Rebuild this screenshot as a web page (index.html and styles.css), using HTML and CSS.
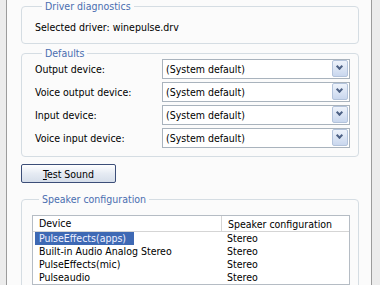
FILE: index.html
```html
<!DOCTYPE html>
<html lang="en">
<head>
    <meta charset="UTF-8">
    <title>Audio</title>
    <link rel="stylesheet" href="styles.css">
</head>
<body>
    <div class="tab-panel">
        <fieldset class="group">
            <legend>Driver diagnostics</legend>
            <p class="driver">Selected driver: winepulse.drv</p>
        </fieldset>

        <fieldset class="group defaults">
            <legend>Defaults</legend>
            <div class="row">
                <span class="label">Output device:</span>
                <div class="combo"><span>(System default)</span><i class="arrow"></i></div>
            </div>
            <div class="row">
                <span class="label">Voice output device:</span>
                <div class="combo"><span>(System default)</span><i class="arrow"></i></div>
            </div>
            <div class="row">
                <span class="label">Input device:</span>
                <div class="combo"><span>(System default)</span><i class="arrow"></i></div>
            </div>
            <div class="row">
                <span class="label">Voice input device:</span>
                <div class="combo"><span>(System default)</span><i class="arrow"></i></div>
            </div>
        </fieldset>

        <button class="test-btn"><u>T</u>est Sound</button>

        <fieldset class="group speakers">
            <legend>Speaker configuration</legend>
            <div class="listview">
                <div class="lv-head">
                    <span class="col-device">Device</span>
                    <span class="col-config">Speaker configuration</span>
                </div>
                <div class="lv-row"><span class="col-device"><em class="selected">PulseEffects(apps)</em></span><span class="col-config">Stereo</span></div>
                <div class="lv-row"><span class="col-device"><em>Built-in Audio Analog Stereo</em></span><span class="col-config">Stereo</span></div>
                <div class="lv-row"><span class="col-device"><em>PulseEffects(mic)</em></span><span class="col-config">Stereo</span></div>
                <div class="lv-row"><span class="col-device"><em>Pulseaudio</em></span><span class="col-config">Stereo</span></div>
            </div>
        </fieldset>
    </div>
</body>
</html>
```

FILE: styles.css
```css
html, body {
    margin: 0;
    height: 100%;
    overflow: hidden;
}
body {
    background: #ececec;
    font-family: "DejaVu Sans Condensed", "Liberation Sans", Arial, sans-serif;
    font-size: 10.5px;
    line-height: 12px;
    color: #000;
}
.tab-panel {
    margin-left: 6px;
    width: 338px;
    height: 285px;
    overflow: hidden;
    padding: 0 12px 0 14px;
    background: #fbfbfb;
    border-left: 1px solid #9c9c9c;
    border-right: 1px solid #9c9c9c;
}
.group {
    margin: 0;
    padding: 0 8px 10px 13px;
    border: 1px solid #d5dde3;
    border-radius: 4px;
}
.group legend {
    margin-left: 7px;
    padding: 0 3px;
    color: #4a6eb0;
}
.driver {
    margin: 9px 0 0 0;
}
.defaults {
    margin-top: 3px;
    padding-bottom: 7px;
}
.defaults legend {
    margin-bottom: -2px;
}
.row {
    display: flex;
    align-items: center;
    height: 23px;
}
.label {
    width: 127px;
}
.combo {
    flex: 1;
    height: 18px;
    display: flex;
    align-items: center;
    justify-content: space-between;
    border: 1px solid #a9b3bd;
    background: #fff;
    padding-left: 3px;
}
.arrow {
    width: 14px;
    height: 15px;
    margin-right: 1px;
    border: 1px solid #b3c3db;
    border-radius: 2px;
    background: linear-gradient(#eef3fb, #c9d7ee);
    position: relative;
}
.arrow::after {
    content: "";
    position: absolute;
    left: 4px;
    top: 3px;
    width: 3px;
    height: 3px;
    border-right: 2px solid #4d6185;
    border-bottom: 2px solid #4d6185;
    transform: rotate(45deg);
}
.test-btn {
    display: block;
    margin-top: 7px;
    width: 95px;
    height: 19px;
    font: inherit;
    color: #000;
    border: 1px solid #3c4e78;
    border-radius: 2px;
    background: linear-gradient(#ffffff, #e6ebf3 50%, #d6deea);
    padding: 0;
}
.speakers {
    margin-top: 10px;
    padding: 10px 8px 10px 10px;
}
.listview {
    border: 1px solid #b5bcc4;
    background: #fff;
}
.lv-head {
    display: flex;
    height: 15px;
    align-items: center;
    border-bottom: 1px solid #d5d5d5;
}
.lv-head .col-device {
    width: 182px;
    padding-left: 6px;
    border-right: 1px solid #d5d5d5;
    height: 15px;
    line-height: 15px;
}
.col-config {
    padding-left: 6px;
}
.lv-row {
    display: flex;
    height: 13px;
    line-height: 13px;
}
.lv-row .col-device {
    padding-left: 2px;
    width: 186px;
}
.lv-row em {
    font-style: normal;
    display: inline-block;
    padding: 0 4px;
}
.lv-row .selected {
    min-width: 99px;
    box-sizing: border-box;
    background: #3e69b4;
    color: #eef0ff;
}
```
